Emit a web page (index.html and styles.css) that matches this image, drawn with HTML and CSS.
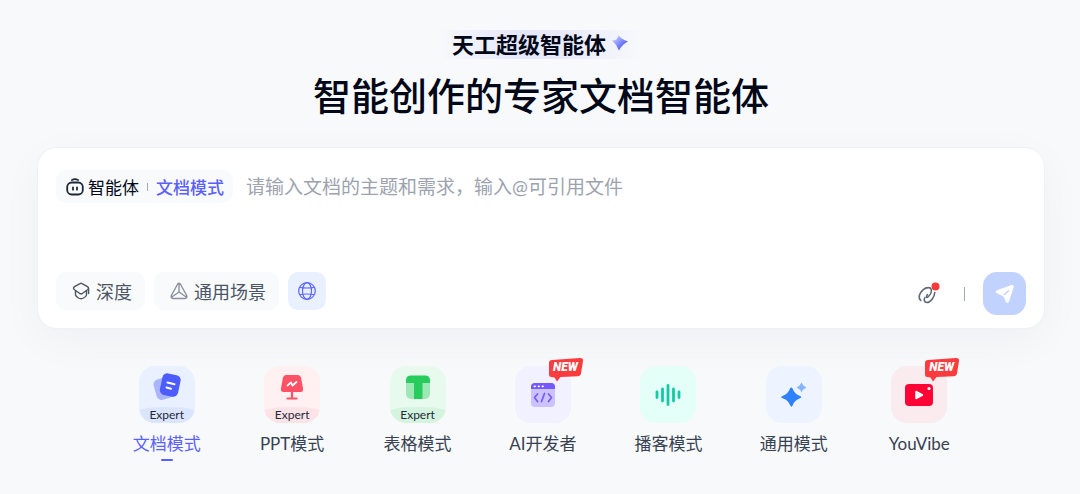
FILE: index.html
```html
<!DOCTYPE html>
<html lang="zh-CN">
<head>
    <meta charset="UTF-8">
    <meta name="viewport" content="width=device-width, initial-scale=1">
    <title>天工超级智能体</title>
    <link rel="stylesheet" href="styles.css">
</head>
<body>

<header class="hero">
    <p class="brand">天工超级智能体
        <svg class="brand-star" viewBox="0 0 16 16" width="16" height="16">
            <defs>
                <linearGradient id="starFill" x1="0" y1="0" x2="1" y2="1">
                    <stop offset="0.15" stop-color="#c3cbff"/>
                    <stop offset="0.8" stop-color="#4a55f5"/>
                </linearGradient>
            </defs>
            <path fill="url(#starFill)" d="M6.500 0Q9 4 16 6.500Q10.500 9 7 15.500Q5 10 0 5.500Q6 5.500 6.500 0Z"/>
        </svg>
    </p>
    <h1>智能创作的专家文档智能体</h1>
</header>

<main>
    <form class="composer">
        <div class="prompt-row">
            <button type="button" class="agent">
                <svg viewBox="0 0 18 18" width="18" height="18" fill="none" stroke="#1f2937" stroke-width="1.800" stroke-linecap="round">
                    <rect x="1.200" y="4.500" width="15.600" height="12" rx="4.500"/>
                    <path d="M6 2Q9 .4 12 2M7 9.300v2.400M11 9.300v2.400"/>
                </svg>
                <span>智能体</span>
                <i class="bar"></i>
                <span class="mode">文档模式</span>
            </button>
            <textarea class="prompt" rows="1" aria-label="输入" placeholder="请输入文档的主题和需求，输入@可引用文件"></textarea>
        </div>
        <div class="tool-row">
            <button type="button" class="tool">
                <svg viewBox="0 0 18 18" width="18" height="18" fill="none" stroke="#4b5563" stroke-width="1.400" stroke-linejoin="round" stroke-linecap="round">
                    <path d="M8 1.600Q9 1 10 1.600L15.500 4.700Q17.500 6 15.500 7.800L10.500 11.300Q9 12.200 7.500 11.300L2.500 7.800Q.5 6 2.500 4.700ZM3.500 9v4Q4 14.500 6.500 16Q9 17.400 11.500 16Q14.300 14.500 14.500 13V9M16.600 6.500v5"/>
                </svg>
                深度
            </button>
            <button type="button" class="tool">
                <svg viewBox="0 0 18 18" width="18" height="18" fill="none" stroke="#8b919d" stroke-width="1.400" stroke-linejoin="round">
                    <path d="M7.700 2Q9 .3 10.300 2L16.700 13.500Q17.500 16.300 15 16.500H3Q.5 16.300 1.300 13.500ZM9 1.500V10L1.800 15M9 10l7.200 5"/>
                </svg>
                通用场景
            </button>
            <button type="button" class="tool web" aria-label="联网">
                <svg viewBox="0 0 18 18" width="18" height="18" fill="none" stroke="#5b66ff" stroke-width="1.200">
                    <circle cx="9" cy="9" r="8.300"/>
                    <ellipse cx="9" cy="9" rx="4.500" ry="8.300"/>
                    <path d="M2 5.500Q9 6.500 16 5.500M2 12.500Q9 11.500 16 12.500"/>
                </svg>
            </button>
            <button type="button" class="attach" aria-label="附件">
                <svg viewBox="0 0 24 24" width="24" height="24" fill="none" stroke="#5f6878" stroke-width="1.600" stroke-linecap="round">
                    <path d="M4.800 18.500C1.800 16 3.300 11 7 7.800C10.500 5 14.500 5 15.300 7.500C15.800 10 14 13.200 12 15C10.500 16.200 9.700 14.500 11.500 12.500M18.800 10.500C18.500 15 14.500 20.500 10.800 20.500C8 20.500 7.800 17.500 8.800 15.500"/>
                    <circle cx="19.500" cy="4.500" r="4" fill="#fa3b3b" stroke="none"/>
                </svg>
            </button>
            <i class="bar tall"></i>
            <button type="submit" class="send" aria-label="发送">
                <svg viewBox="0 0 22 22" width="22" height="22">
                    <path fill="#fff" d="M3 7.200L17.500 2Q20 1.500 19.800 4L15 18.500Q13.500 21.500 11.800 18.500L10 14.500Q9.300 13 7.500 12.500L3.200 10.500Q.2 8.700 3 7.200Z"/>
                    <path stroke="#c2d2ff" stroke-width="1.500" stroke-linecap="round" d="M10.500 11.500L14.500 7.800"/>
                </svg>
            </button>
        </div>
    </form>

    <nav class="modes">
        <a href="#doc" class="item active">
            <span class="tile doc">
                <svg viewBox="0 0 28 28" width="28" height="28">
                    <rect x="2" y="5" width="18" height="21" rx="5" fill="#a9b5ff" transform="rotate(-16 11 16)"/>
                    <rect x="8" y="1" width="18.500" height="22" rx="5" fill="#4c5cff" transform="rotate(12 17 12)"/>
                    <path d="M14.500 9.500l7 1.800M13.500 14.500l4.500 1.200" stroke="#fff" stroke-width="2" stroke-linecap="round"/>
                </svg>
                <span class="expert">Expert</span>
            </span>
            文档模式
        </a>
        <a href="#ppt" class="item">
            <span class="tile ppt">
                <svg viewBox="0 0 28 28" width="28" height="28">
                    <path fill="#ff5266" d="M8 2H20Q22.500 2 23 4.500L25 15.500Q25.500 19 22.500 19H5.500Q2.500 19 3 15.500L5 4.500Q5.500 2 8 2Z"/>
                    <path d="M14 19v6.500M9.500 25.500h9" stroke="#ff5266" stroke-width="2.200" stroke-linecap="round"/>
                    <path d="M9.500 12.500l3.500-3 1.500 3 4-3.500" fill="none" stroke="#fff" stroke-width="1.700" stroke-linecap="round" stroke-linejoin="round"/>
                </svg>
                <span class="expert">Expert</span>
            </span>
            PPT模式
        </a>
        <a href="#sheet" class="item">
            <span class="tile sheet">
                <svg viewBox="0 0 28 28" width="28" height="28">
                    <rect x="2" y="3" width="24" height="23" rx="5" fill="#9ee8b6"/>
                    <path fill="#27cc5c" d="M7 2.500H21Q26 2.500 26 7.500V10H18.500V26H10V10H2V7.500Q2 2.500 7 2.500Z"/>
                </svg>
                <span class="expert">Expert</span>
            </span>
            表格模式
        </a>
        <a href="#dev" class="item">
            <span class="tile dev">
                <svg viewBox="0 0 28 28" width="28" height="28">
                    <rect x="2" y="2" width="24" height="24" rx="4" fill="#cbc2ff"/>
                    <path fill="#7659fb" d="M6 2H22Q26 2 26 6V8H2V6Q2 2 6 2Z"/>
                    <path d="M5.500 5.300h.5M9.500 5.300h.5M13.500 5.300h.5" stroke="#fff" stroke-width="1.800" stroke-linecap="round"/>
                    <path d="M8.500 13l-3 3.500 3 4M19.500 13l3 3.500-3 4M15.500 12.500l-3 8" fill="none" stroke="#7659fb" stroke-width="1.700" stroke-linecap="round" stroke-linejoin="round"/>
                </svg>
            </span>
            <span class="new">
                <svg viewBox="0 0 36 24" width="36" height="24"><path fill="#fb3b3e" d="M4 2L32 0Q35.500 0 35 3L33 15.500Q32.500 18 30 18.200L12.500 19L9 23.500L6.500 19.500L3.500 19Q1 19 1 16.500V5Q1 2.200 4 2Z"/></svg>
                <b>NEW</b>
            </span>
            AI开发者
        </a>
        <a href="#podcast" class="item">
            <span class="tile podcast">
                <svg viewBox="0 0 28 28" width="28" height="28" stroke="#14caa5" stroke-width="2.800" stroke-linecap="round">
                    <path d="M3 11v5.500M8.500 8v12M14 4.500v19M19.500 8v12M25 11v5.500"/>
                </svg>
            </span>
            播客模式
        </a>
        <a href="#general" class="item">
            <span class="tile general">
                <svg viewBox="0 0 28 28" width="28" height="28">
                    <path fill="#2f80ff" d="M11 6.500Q12 6 12.800 8Q14.500 13 20 15Q22.500 16.200 20 17.300Q14.500 19.500 12.800 24Q11.500 27.500 10 24Q8 19 2.500 17.300Q0 16.200 2.500 15Q8 13 9.800 8Q10.200 6.500 11 6.500Z"/>
                    <path fill="#85b5ff" d="M21.500 1.500Q23 5 26.500 6.500Q23 8 21.500 11.500Q20 8 16.500 6.500Q20 5 21.500 1.500Z"/>
                </svg>
            </span>
            通用模式
        </a>
        <a href="#youvibe" class="item">
            <span class="tile video">
                <svg viewBox="0 0 28 28" width="28" height="28">
                    <rect y="3" width="28" height="22" rx="4" fill="#ff0435"/>
                    <path fill="#fff" stroke="#fff" stroke-width="1.500" stroke-linejoin="round" d="M11 10.500v7l6.500-3.500Z"/>
                    <circle cx="24" cy="7.500" r="1.600" fill="#fff"/>
                </svg>
            </span>
            <span class="new">
                <svg viewBox="0 0 36 24" width="36" height="24"><path fill="#fb3b3e" d="M4 2L32 0Q35.500 0 35 3L33 15.500Q32.500 18 30 18.200L12.500 19L9 23.500L6.500 19.500L3.500 19Q1 19 1 16.500V5Q1 2.200 4 2Z"/></svg>
                <b>NEW</b>
            </span>
            YouVibe
        </a>
    </nav>
</main>

</body>
</html>
```
FILE: styles.css
```css
* {
    box-sizing: border-box;
}
body {
    margin: 0;
    padding: 30px 35px 24px 37px;
    min-height: 100vh;
    background-color: #f7f9fb;
    color: #020817;
    font-family: Lato, "Noto Sans CJK SC", sans-serif;
    font-size: 17px;
}
button, textarea {
    font: inherit;
    color: inherit;
    border: 0;
    padding: 0;
    background: none;
}
button {
    cursor: pointer;
}
svg {
    display: block;
    flex: none;
}

/* header */
.hero {
    display: flex;
    flex-direction: column;
    align-items: center;
}
.brand {
    display: flex;
    gap: 6px;
    margin: 0;
    padding: 0 14px 0 12px;
    height: 29px;
    line-height: 29px;
    font-size: 22px;
    font-weight: 700;
    background: linear-gradient(90deg, #f7f9fb, #e4e6fb 40%, #e8eafb 60%, #f7f9fb);
}
.brand-star {
    margin-top: 5px;
}
h1 {
    margin: 8px 0 0;
    font-size: 38px;
    line-height: 56px;
    font-weight: 500;
}

/* input card */
.composer {
    display: flex;
    flex-direction: column;
    justify-content: space-between;
    min-height: 182px;
    margin-top: 24px;
    padding: 22px 18px 13px;
    border: 1px solid #f0f1f4;
    border-radius: 20px;
    background-color: #fff;
    box-shadow: 0 12px 44px rgba(30, 35, 60, 0.04);
}
.prompt-row {
    display: flex;
    align-items: center;
}
.agent {
    display: flex;
    align-items: center;
    flex: none;
    height: 33px;
    padding: 0 9px 0 10px;
    border-radius: 10px;
    background-color: #f8fafc;
}
.agent span {
    margin-left: 4px;
}
.agent .mode {
    margin-left: 8px;
    color: #5b5fff;
    font-weight: 500;
}
.bar {
    width: 1px;
    height: 8px;
    margin-left: 8px;
    background-color: #a3a9b5;
}
.prompt {
    flex: 1;
    height: 28px;
    margin-left: 13px;
    resize: none;
    outline: none;
    font-size: 19px;
    line-height: 28px;
    overflow: hidden;
}
.prompt::placeholder {
    color: #9ca3af;
}
.tool-row {
    display: flex;
    align-items: flex-start;
    gap: 9px;
}
.tool {
    display: flex;
    align-items: center;
    gap: 6px;
    height: 38px;
    padding: 0 13px 0 16px;
    border-radius: 10px;
    background-color: #f8fafc;
    color: #4b5563;
    font-size: 18px;
}
.web {
    padding: 0 10px;
    background-color: #e9f0ff;
}
.attach {
    align-self: center;
    margin-left: auto;
}
.tall {
    align-self: center;
    height: 14px;
    margin: 0 9px 0 15px;
}
.send {
    display: flex;
    align-items: center;
    justify-content: center;
    width: 43px;
    height: 43px;
    border-radius: 14px;
    background-color: #c2d2ff;
}

/* mode list */
.modes {
    display: grid;
    grid-template-columns: repeat(7, 1fr);
    max-width: 882px;
    margin: 37px auto 0;
    padding-left: 4px;
}
.item {
    position: relative;
    display: flex;
    flex-direction: column;
    align-items: center;
    color: #374151;
    line-height: 24px;
    text-decoration: none;
}
.tile {
    display: flex;
    align-items: center;
    justify-content: center;
    width: 56px;
    height: 57px;
    margin-bottom: 9px;
    border-radius: 16px;
    overflow: hidden;
}
.doc, .ppt, .sheet {
    flex-direction: column;
    justify-content: space-between;
    padding-top: 7px;
}
.expert {
    width: 100%;
    height: 16px;
    border-radius: 50% 50% 0 0 / 4px 4px 0 0;
    color: #1f2937;
    font-size: 12px;
    line-height: 16px;
    text-align: center;
}
.doc { background-color: #e9f0ff; }
.doc .expert { background-color: #dbe5ff; }
.ppt { background-color: #fff0f1; }
.ppt .expert { background-color: #fce3e8; }
.sheet { background-color: #e8faee; }
.sheet .expert { background-color: #d5f4df; }
.dev { background-color: #f1f1ff; }
.podcast { background-color: #e3fff8; }
.general { background-color: #edf4ff; }
.video { background-color: #faebee; }

.active {
    color: #5b5fff;
}
.active::after {
    content: "";
    width: 12px;
    height: 2px;
    margin-top: 3px;
    border-radius: 1px;
    background-color: #5b5fff;
}
.new {
    position: absolute;
    top: -8px;
    left: calc(50% + 5px);
}
.new b {
    position: absolute;
    top: 0;
    left: 5px;
    color: #fff;
    font: italic 900 12px/19px Roboto, sans-serif;
}
```
